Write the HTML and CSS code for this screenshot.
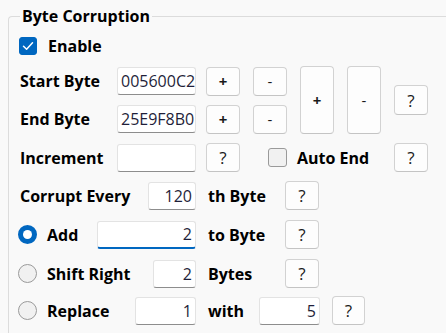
FILE: index.html
```html
<!DOCTYPE html>
<html>
<head>
<meta charset="utf-8">
<link rel="stylesheet" href="styles.css">
</head>
<body>
<fieldset class="group">
  <legend class="title">Byte Corruption</legend>

  <div class="row row-enable">
    <span class="cb cb-on"><svg width="12" height="10" viewBox="0 0 12 10"><path d="M1.5 5.2 L4.6 8.2 L10.5 1.8" fill="none" stroke="#fff" stroke-width="1.5" stroke-linecap="round" stroke-linejoin="round"/></svg></span>
    <span class="lbl">Enable</span>
  </div>

  <div class="range">
    <div class="range-rows">
      <div class="row">
        <div class="cell"><span class="lbl">Start Byte</span><span class="tb tb-hex">005600C2</span></div>
        <span class="btn btn-first btn-pm">+</span>
        <span class="btn btn-pm btn-minus">-</span>
      </div>
      <div class="row">
        <div class="cell"><span class="lbl">End Byte</span><span class="tb tb-hex">25E9F8B0</span></div>
        <span class="btn btn-first btn-pm">+</span>
        <span class="btn btn-pm btn-minus">-</span>
      </div>
    </div>
    <span class="btn btn-tall btn-pm">+</span>
    <span class="btn btn-tall btn-pm btn-minus">-</span>
    <span class="btn btn-q">?</span>
  </div>

  <div class="row row-inc">
    <div class="cell"><span class="lbl">Increment</span><span class="tb tb-hex"></span></div>
    <span class="btn btn-first">?</span>
    <div class="autoend"><span class="cb"></span><span class="lbl">Auto End</span></div>
    <span class="btn">?</span>
  </div>

  <div class="row row-every">
    <div class="cell"><span class="lbl">Corrupt Every</span><span class="tb tb-every">120</span></div>
    <span class="after">th Byte</span>
    <span class="btn">?</span>
  </div>

  <div class="row row-add">
    <div class="cell"><span class="rd rd-on"></span><span class="lbl">Add</span><span class="tb tb-add tb-focus">2</span></div>
    <span class="after">to Byte</span>
    <span class="btn">?</span>
  </div>

  <div class="row row-shift">
    <div class="cell"><span class="rd"></span><span class="lbl">Shift Right</span><span class="tb tb-shift">2</span></div>
    <span class="after">Bytes</span>
    <span class="btn">?</span>
  </div>

  <div class="row row-rep">
    <div class="cell"><span class="rd"></span><span class="lbl">Replace</span><span class="tb tb-rep">1</span></div>
    <span class="after after-with">with</span>
    <span class="tb tb-with">5</span>
    <span class="btn btn-with">?</span>
  </div>
</fieldset>
</body>
</html>
```

FILE: styles.css
```css
* { box-sizing: border-box; }
html, body {
  margin: 0;
  padding: 0;
  background: #f9f9f9;
  overflow: hidden;
  width: 446px;
  height: 333px;
}
body {
  font-family: "Open Sans", "Noto Sans", sans-serif;
  color: #000;
}
.group {
  margin: 6px 0 0 8px;
  width: 438px;
  height: 327px;
  padding: 0 0 0 10px;
  border: 1px solid #dcdcdc;
  border-right: none;
  border-bottom: none;
  border-radius: 4px 0 0 0;
  min-width: 0;
}
.title {
  margin-left: 1px;
  padding: 0 2px;
  font-size: 16px;
  font-weight: 700;
  line-height: 20px;
  height: 20px;
}
.row {
  display: flex;
  align-items: center;
  height: 29px;
}
.row-enable { height: 20px; margin-top: 10px; }
.lbl {
  font-size: 16px;
  font-weight: 700;
  white-space: nowrap;
}
.cell {
  width: 177px;
  height: 29px;
  display: flex;
  align-items: center;
  padding-left: 1px;
  flex: none;
}
.cell .tb { margin-left: auto; }

.cb {
  width: 18px;
  height: 18px;
  border-radius: 3px;
  border: 1px solid #9a9a9a;
  background: #f1f1f1;
  display: flex;
  align-items: center;
  justify-content: center;
  flex: none;
}
.cb-on {
  background: #0067c0;
  border-color: #0067c0;
}
.row-enable .cb { margin-right: 11px; }

.rd {
  width: 19px;
  height: 19px;
  border-radius: 50%;
  border: 1px solid #9a9a9a;
  background: #f1f1f1;
  margin-left: -2px;
  margin-right: 10px;
  flex: none;
}
.rd-on {
  background: #0067c0;
  border: 5px solid #0067c0;
  position: relative;
}
.rd-on::after {
  content: "";
  position: absolute;
  inset: 0;
  border-radius: 50%;
  background: #fff;
}

.tb {
  height: 28px;
  background: #fff;
  border: 1px solid #e3e3e3;
  border-bottom: 1px solid #8d8d8d;
  border-radius: 3px;
  font-size: 16px;
  line-height: 26px;
  color: #1f1f3a;
  padding: 0 3px;
  text-align: right;
  white-space: nowrap;
  overflow: hidden;
  flex: none;
}
.tb-hex { width: 79px; text-align: left; padding-left: 3px; }
.tb-every { width: 48px; }
.tb-add { width: 99px; }
.tb-shift { width: 43px; }
.tb-rep { width: 61px; }
.tb-with { width: 61px; }
.tb-focus {
  border-bottom: 2px solid #0067c0;
  line-height: 25px;
}

.btn {
  width: 34px;
  height: 29px;
  background: #fdfdfd;
  border: 1px solid #d2d2d2;
  border-bottom-color: #c4c4c4;
  border-radius: 4px;
  display: flex;
  align-items: center;
  justify-content: center;
  font-size: 17px;
  color: #1a1a1a;
  flex: none;
}
.btn-pm { font-weight: 700; font-size: 15px; }
.btn-minus { font-weight: 400; }
.btn + .btn { margin-left: 13px; }
.btn-first { margin-left: 10px; }

.range {
  display: flex;
  align-items: center;
  margin-top: 10px;
}
.range-rows {
  display: flex;
  flex-direction: column;
  gap: 9px;
}
.btn-tall {
  height: 68px;
  margin-left: 13px;
}
.range .btn-q { margin-left: 13px; height: 30px; }

.row-inc { margin-top: 9px; }
.autoend {
  width: 126px;
  margin-left: 28px;
  display: flex;
  align-items: center;
}
.autoend .cb { width: 19px; height: 19px; margin-right: 10px; }
.autoend + .btn { margin-left: 0; }

.after {
  font-size: 16px;
  font-weight: 700;
  margin-left: 12px;
  width: 77px;
  white-space: nowrap;
}
.row-every { margin-top: 9px; }
.row-add { margin-top: 10px; }
.row-shift { margin-top: 10px; }
.row-rep { margin-top: 8px; }
.after-with { width: 51px; }
.btn-with { margin-left: 12px; width: 33px; }
```
